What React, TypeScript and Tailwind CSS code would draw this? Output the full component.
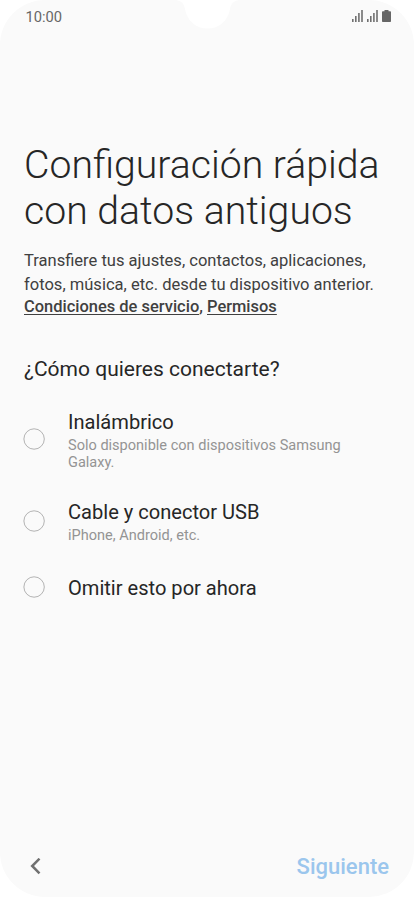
import React, { useState } from "react";

type Option = {
  id: string;
  title: string;
  description?: string;
  rowClass: string;
  radioClass: string;
};

const options: Option[] = [
  {
    id: "wireless",
    title: "Inalámbrico",
    description: "Solo disponible con dispositivos Samsung Galaxy.",
    rowClass: "h-[62px]",
    radioClass: "-mt-[2px]",
  },
  {
    id: "usb",
    title: "Cable y conector USB",
    description: "iPhone, Android, etc.",
    rowClass: "mt-[27px] h-[46px]",
    radioClass: "-mt-px",
  },
  {
    id: "skip",
    title: "Omitir esto por ahora",
    rowClass: "mt-[31px] h-[26px]",
    radioClass: "-mt-[3px]",
  },
];

const SignalIcon: React.FC = () => (
  <svg width="11" height="12" viewBox="0 0 11 12" fill="#707070">
    <rect x="0" y="9" width="1.6" height="3" />
    <rect x="3" y="6" width="1.6" height="6" />
    <rect x="6.1" y="3" width="1.6" height="9" />
    <rect x="9.2" y="0" width="1.6" height="12" />
  </svg>
);

const StatusBar: React.FC = () => (
  <div className="relative flex h-[34px] items-start justify-between pl-[25.5px] pr-[23px]">
    <span className="mt-[9px] text-[14.7px] leading-[17px] text-[#666666]">
      10:00
    </span>

    {/* Camera notch */}
    <svg
      className="absolute left-[176px] top-0"
      width="64"
      height="29"
      viewBox="0 0 64 29"
      fill="#ffffff"
    >
      <path d="M0 0C6 1 8 4 9 9C11 21 20 28.5 31.5 28.5C43 28.5 52 21 54 9C55 4 57 1 63 0Z" />
    </svg>

    <div className="mt-[10px] flex items-start gap-[4px]">
      <SignalIcon />
      <SignalIcon />
      <svg width="9" height="12" viewBox="0 0 9 12" fill="#666666">
        <path d="M2.5 0H6.5V1.3H8.2Q9 1.3 9 2.1V11.2Q9 12 8.2 12H.8Q0 12 0 11.2V2.1Q0 1.3 .8 1.3H2.5Z" />
      </svg>
    </div>
  </div>
);

const Radio: React.FC<{ checked: boolean; className: string }> = ({
  checked,
  className,
}) => (
  <svg
    className={`-ml-px shrink-0 ${className}`}
    width="22"
    height="22"
    viewBox="0 0 22 22"
    fill="none"
  >
    <circle cx="11.1" cy="11" r="10.2" stroke="#aaaaaa" strokeWidth="0.9" />
    {checked && <circle cx="11.1" cy="11" r="5.5" fill="#3d8fdd" />}
  </svg>
);

const App: React.FC = () => {
  const [selected, setSelected] = useState("");

  return (
    <div className="h-[897px] w-[414px] overflow-hidden bg-white font-['Roboto',sans-serif]">
      <div className="flex h-full flex-col rounded-[45px] bg-[#fafafa]">
        <StatusBar />

        <main className="flex-1 pl-[24px] pr-[24px] pt-[108px] text-[#262626]">
          <h1 className="whitespace-nowrap text-[39.2px] font-light leading-[46px]">
            Configuración rápida
            <br />
            con datos antiguos
          </h1>

          <p className="mt-[15px] whitespace-nowrap text-[16.55px] leading-[24px] text-[#404040]">
            Transfiere tus ajustes, contactos, aplicaciones,
            <br />
            fotos, música, etc. desde tu dispositivo anterior.
          </p>
          <p className="whitespace-nowrap text-[16.47px] font-medium leading-[20px] text-[#404040]">
            <a className="underline underline-offset-2">
              Condiciones de servicio
            </a>
            , <a className="underline underline-offset-2">Permisos</a>
          </p>

          <h2 className="mt-[40px] text-[21px] leading-[24px]">
            ¿Cómo quieres conectarte?
          </h2>

          <div className="mt-[28px]">
            {options.map((option) => (
              <button
                key={option.id}
                type="button"
                onClick={() => setSelected(option.id)}
                className={`flex w-full items-center text-left ${option.rowClass}`}
              >
                <Radio
                  checked={selected === option.id}
                  className={option.radioClass}
                />
                <span className="ml-[23px] w-[290px]">
                  <span className="block text-[20.08px] leading-[26px]">
                    {option.title}
                  </span>
                  {option.description && (
                    <span className="mt-[2px] block text-[14.56px] leading-[17px] text-[#949494]">
                      {option.description}
                    </span>
                  )}
                </span>
              </button>
            ))}
          </div>
        </main>

        {/* Bottom navigation */}
        <footer className="flex h-[62px] items-center justify-between pl-[30px] pr-[25px]">
          <button type="button" aria-label="Atrás">
            <svg
              width="11"
              height="17"
              viewBox="0 0 11 17"
              fill="none"
              stroke="#707070"
              strokeWidth="2.5"
            >
              <path d="M9.5 .7L2.2 8L9.5 15.3" />
            </svg>
          </button>
          <button
            type="button"
            className="mt-[2px] text-[22px] font-medium leading-[26px] text-[#9bc6ed]"
          >
            Siguiente
          </button>
        </footer>
      </div>
    </div>
  );
};

export default App;
